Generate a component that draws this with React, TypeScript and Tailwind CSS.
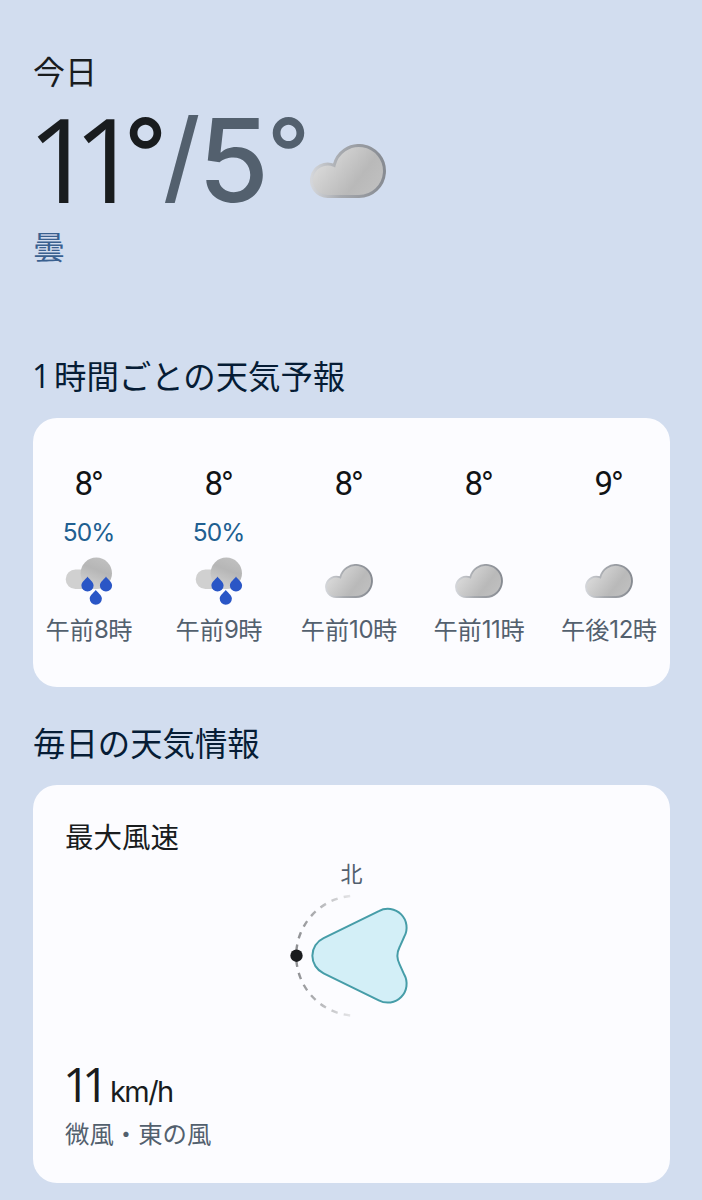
import React, { useId } from 'react';

const CJK = "font-['Noto_Sans_CJK_JP','Noto_Sans',sans-serif]";
const NUM = "font-['Inter','Noto_Sans_CJK_JP',sans-serif]";
const OPEN = "font-['Open_Sans','Noto_Sans_CJK_JP',sans-serif]";

const hours = [
  { temp: '8', rain: '50%', prefix: '午前', hour: '8' },
  { temp: '8', rain: '50%', prefix: '午前', hour: '9' },
  { temp: '8', rain: '', prefix: '午前', hour: '10' },
  { temp: '8', rain: '', prefix: '午前', hour: '11' },
  { temp: '9', rain: '', prefix: '午後', hour: '12' },
];

const CloudIcon = ({ className }: { className: string }) => {
  const id = useId();
  return (
    <svg viewBox="0 0 76 54" className={className}>
      <defs>
        <linearGradient id={`${id}-fill`} gradientUnits="userSpaceOnUse" x1="14" y1="10" x2="66" y2="50">
          <stop offset="0" stopColor="#dadada" />
          <stop offset="0.65" stopColor="#b9b9b9" />
          <stop offset="1" stopColor="#c0c0c0" />
        </linearGradient>
        <linearGradient id={`${id}-edge`} x1="0" y1="0" x2="1" y2="0">
          <stop offset="0" stopColor="#d4d6da" />
          <stop offset="0.4" stopColor="#a6a9ae" />
          <stop offset="1" stopColor="#878b92" />
        </linearGradient>
      </defs>
      <path
        d="M17.7 52.5H49A25.5 25.5 0 1 0 24.1 21.4A16.2 16.2 0 1 0 17.7 52.5Z"
        fill={`url(#${id}-fill)`}
        stroke={`url(#${id}-edge)`}
        strokeWidth="3"
      />
    </svg>
  );
};

const RainIcon = ({ className }: { className: string }) => {
  const id = useId();
  const drop = 'M0 0C1 2.4 6.1 5 6.1 8.8A6.1 6.1 0 0 1 -6.1 8.8C-6.1 5 -1 2.4 0 0Z';
  return (
    <svg viewBox="0 0 48 48" className={className}>
      <defs>
        <linearGradient id={`${id}-big`} x1="0.7" y1="0" x2="0.3" y2="1">
          <stop offset="0" stopColor="#c0c0c0" />
          <stop offset="0.4" stopColor="#b6b6b6" />
          <stop offset="1" stopColor="#d2d2d2" />
        </linearGradient>
      </defs>
      <path d="M10.5 12.4a9.8 9.8 0 0 0 0 19.6H31V12.4Z" fill="#d0d0d0" />
      <circle cx="31.3" cy="16.3" r="15.7" fill={`url(#${id}-big)`} />
      <path d={drop} transform="translate(22.5 19.6)" fill="#2a56c6" />
      <path d={drop} transform="translate(41 19.6)" fill="#2a56c6" />
      <path d={drop} transform="translate(30.8 32.8)" fill="#2a56c6" />
    </svg>
  );
};

const WindCompass = () => (
  <svg viewBox="285 890 134 132" className="h-[132px] w-[134px]">
    <defs>
      <linearGradient id="arc-fade" gradientUnits="userSpaceOnUse" x1="296" y1="0" x2="356" y2="0">
        <stop offset="0" stopColor="#8e8f92" />
        <stop offset="0.5" stopColor="#c0c1c4" />
        <stop offset="1" stopColor="#ececee" />
      </linearGradient>
    </defs>
    <g fill="none" stroke="url(#arc-fade)" strokeWidth="2.4" strokeDasharray="6.5 6.3" strokeDashoffset="-4.75">
      <path d="M296.2 955.7A60 60 0 0 1 354 895.7" />
      <path d="M296.2 955.7A60 60 0 0 0 354 1015.7" />
    </g>
    <circle cx="296.5" cy="955.7" r="6.2" fill="#1a1c1e" />
    <path
      d="M323.6 938.1L378.8 911.1A18.8 18.8 0 0 1 404.2 936.8L399.5 947.3Q395.3 955.7 399.5 964.1L404.2 974.6A18.8 18.8 0 0 1 378.8 1000.3L323.6 973.3A19.4 19.4 0 0 1 323.6 938.1Z"
      fill="#d3eff7"
      stroke="#469da8"
      strokeWidth="2"
    />
  </svg>
);

export default function App() {
  return (
    <main className={`min-h-[1200px] w-[702px] overflow-hidden bg-[#d2ddef] px-[33px] pt-[49px] ${CJK}`}>
      <section className="h-[306px]">
        <div className="h-10 pt-px text-[32px] leading-10 text-[#191c1e]">今日</div>
        <div className={`mt-3 flex h-[120px] text-[115px] leading-[120px] ${NUM}`}>
          <span className={`-ml-[6px] w-[46px] text-[118px] leading-[114px] font-medium text-[#191c1e] ${OPEN}`}>1</span>
          <span className={`w-[51px] text-[118px] leading-[114px] font-medium text-[#191c1e] ${OPEN}`}>1</span>
          <span className="w-[39px] text-[94px] leading-[102px] font-medium text-[#191c1e]">°</span>
          <span className="w-[35px] text-[101px] leading-[109px] font-medium text-[#53606e]">/</span>
          <span className="w-[69px] font-medium text-[#53606e]">5</span>
          <span className="w-[43px] text-[94px] leading-[102px] font-medium text-[#53606e]">°</span>
          <CloudIcon className="mt-[43px] h-[54px] w-[76px] shrink-0" />
        </div>
        <div className="mt-1 h-10 text-[32px] leading-10 text-[#3a608f]">曇</div>
      </section>

      <h2 className="flex h-10 text-[32.4px] leading-10 text-[#061c35]">
        <span className={`-ml-px w-[22px] pt-px text-[32px] leading-10 ${OPEN}`}>1</span>
        <span>時間ごとの天気予報</span>
      </h2>
      <section className="mt-[23px] h-[269px] w-[637px] overflow-hidden rounded-3xl bg-[#fcfcff] pt-[46px]">
        <div className="-ml-[9px] flex">
          {hours.map((h) => (
            <div key={h.prefix + h.hour} className="flex w-[130px] shrink-0 flex-col items-center">
              <div className="flex h-10 font-['Roboto'] text-[33px] leading-10 text-[#111315]">
                <span className="w-[17px]">{h.temp}</span>
                <span className={`text-[26px] leading-[34px] ${NUM}`}>°</span>
              </div>
              <div className={`mt-3 h-8 pr-px text-[24.5px] leading-8 tracking-[-0.04em] text-[#205f91] ${NUM}`}>
                {h.rain}
              </div>
              {h.rain ? (
                <RainIcon className="mt-[9px] size-12" />
              ) : (
                <CloudIcon className="mt-4 mb-[7px] h-[34px] w-12" />
              )}
              <div className="mt-2 flex h-8 text-[24.2px] leading-8 text-[#53606e]">
                <span>{h.prefix}</span>
                <span className={`pt-px text-[24px] tracking-[-0.02em] ${NUM}`}>{h.hour}</span>
                <span>時</span>
              </div>
            </div>
          ))}
        </div>
      </section>

      <h2 className="mt-[35px] h-10 text-[32.4px] leading-10 text-[#061c35]">毎日の天気情報</h2>
      <section className="mt-[23px] h-[398px] w-[637px] rounded-3xl bg-[#fcfcff] px-8 pt-[31px]">
        <h3 className="h-10 text-[28.5px] leading-10 text-[#191c1e]">最大風速</h3>
        <div className="mt-1 flex flex-col items-center">
          <div className="h-6 text-[22px] leading-6 text-[#53606e]">北</div>
          <div className="mt-[6px]">
            <WindCompass />
          </div>
        </div>
        <div className={`mt-[39px] flex h-12 text-[47px] leading-[48px] text-[#191c1e] ${NUM}`}>
          <span className={`-ml-[2px] w-[19px] leading-[46px] font-medium ${OPEN}`}>1</span>
          <span className={`w-[28px] leading-[46px] font-medium ${OPEN}`}>1</span>
          <span className="pt-[7px] text-[29px] tracking-[-0.055em]">km/h</span>
        </div>
        <div className="mt-2 h-8 text-[24.4px] leading-8 text-[#53606e]">微風・東の風</div>
      </section>
    </main>
  );
}
